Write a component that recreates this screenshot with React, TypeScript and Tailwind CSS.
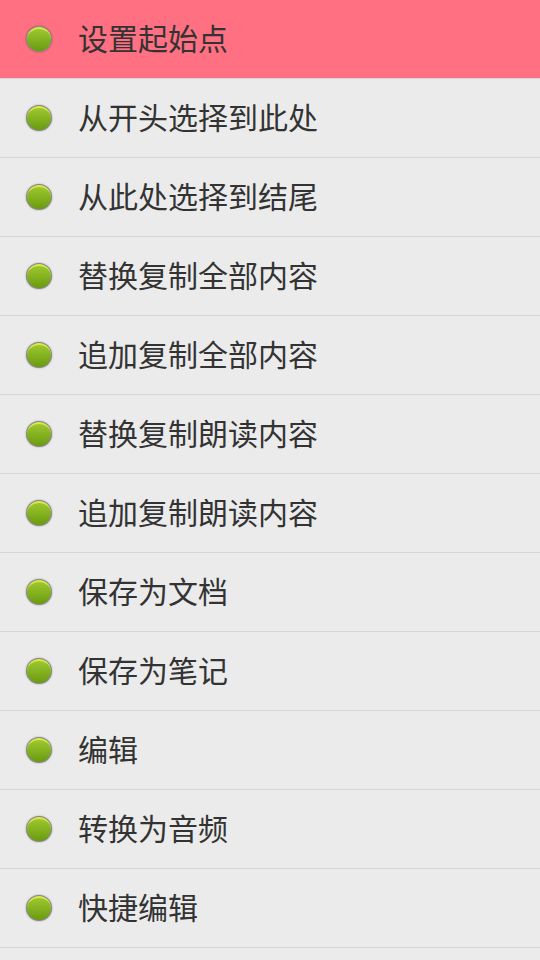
import React from "react";

const items = [
  "设置起始点",
  "从开头选择到此处",
  "从此处选择到结尾",
  "替换复制全部内容",
  "追加复制全部内容",
  "替换复制朗读内容",
  "追加复制朗读内容",
  "保存为文档",
  "保存为笔记",
  "编辑",
  "转换为音频",
  "快捷编辑",
];

const Bullet = () => (
  <div className="h-[26px] w-[26px] shrink-0 rounded-full bg-[#8a8a8a] p-[1px] shadow-[0_0_2px_rgba(0,0,0,0.35)]">
    <div className="h-full w-full rounded-full border-t-2 border-[#d8e84a] bg-gradient-to-b from-[#9cc82e] to-[#6a9a0e]" />
  </div>
);

const App = () => {
  return (
    <div
      className="h-[960px] w-[540px] overflow-hidden bg-[#ebebeb]"
      style={{ fontFamily: '"Noto Sans CJK SC", "Noto Sans", sans-serif' }}
    >
      {items.map((t, i) => (
        <div
          key={t}
          className={`flex h-[79px] items-center border-b border-[#d6d6d6] pl-[26px] ${
            i === 0 ? "bg-[#fe7082]" : ""
          }`}
        >
          <Bullet />
          <span className="ml-[26px] pb-[4px] text-[30px] leading-none text-[#333333]">
            {t}
          </span>
        </div>
      ))}
    </div>
  );
};

export default App;
